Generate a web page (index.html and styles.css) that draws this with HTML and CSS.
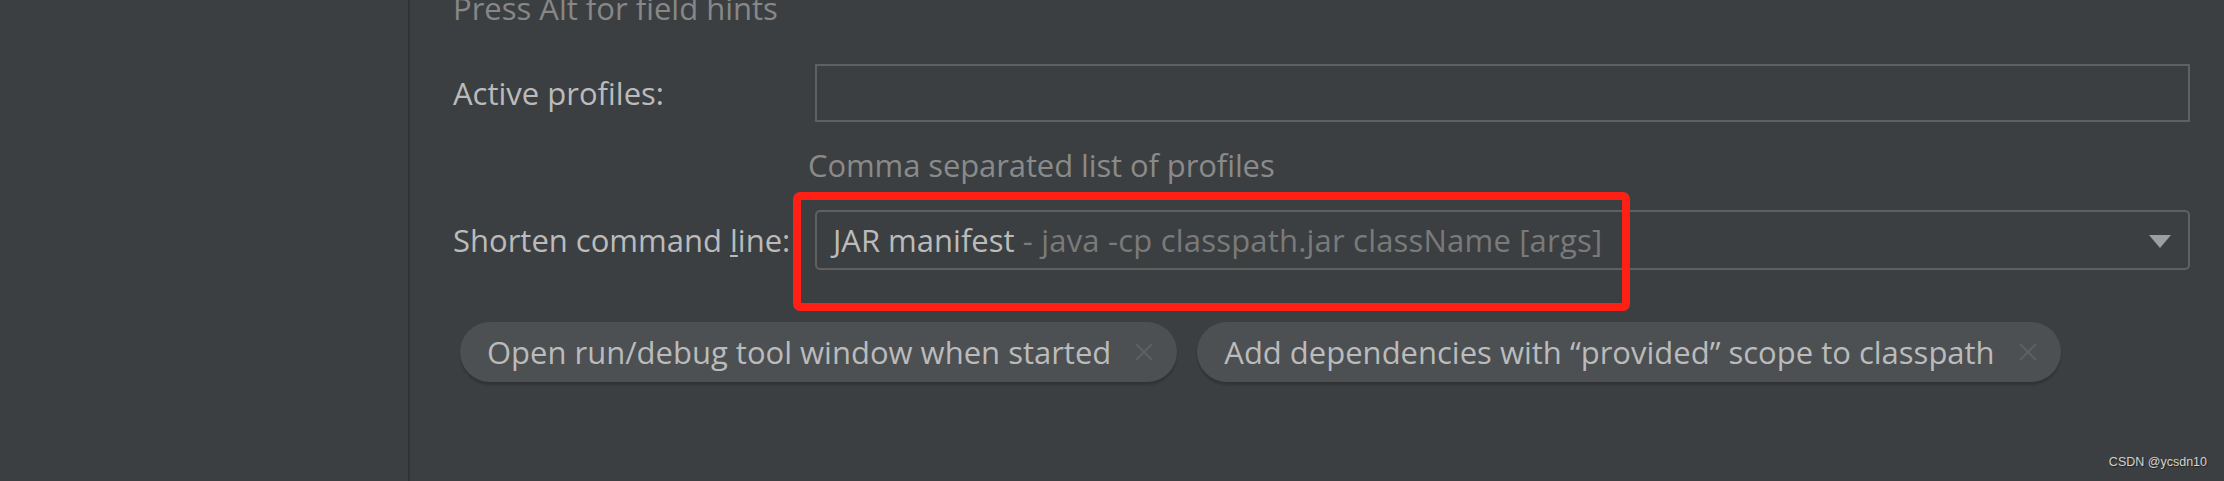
FILE: index.html
```html
<!DOCTYPE html>
<html lang="en">
<head>
<meta charset="utf-8">
<title>Run configuration</title>
<link rel="stylesheet" href="styles.css">
</head>
<body>
<div class="window">
  <aside class="sidebar"></aside>
  <main class="content">
    <div class="press-hint">Press Alt for field hints</div>
    <div class="form">
      <div class="label row-profiles">Active profiles:</div>
      <div class="textfield row-profiles"></div>
      <div class="comment">Comma separated list of profiles</div>
      <div class="label row-shorten">Shorten command <span class="mnemonic">l</span>ine:</div>
      <div class="combo row-shorten">
        <span class="combo-value">JAR manifest</span><span class="combo-desc">&nbsp;- java -cp classpath.jar className [args]</span>
        <svg class="combo-arrow" width="22" height="13" viewBox="0 0 22 13"><path d="M0 0 H22 L11 13 Z" fill="#9c9fa2"/></svg>
        <span class="red-box"></span>
      </div>
    </div>
    <div class="chips">
      <div class="chip">
        <span class="chip-text">Open run/debug tool window when started</span>
        <svg class="chip-close" width="18" height="18" viewBox="0 0 18 18"><path d="M1 1 L17 17 M17 1 L1 17" stroke="#5d6164" stroke-width="2" fill="none"/></svg>
      </div>
      <div class="chip">
        <span class="chip-text">Add dependencies with “provided” scope to classpath</span>
        <svg class="chip-close" width="18" height="18" viewBox="0 0 18 18"><path d="M1 1 L17 17 M17 1 L1 17" stroke="#5d6164" stroke-width="2" fill="none"/></svg>
      </div>
    </div>
  </main>
  <div class="watermark">CSDN @ycsdn10</div>
</div>
</body>
</html>
```
FILE: styles.css
```css
html, body {
  margin: 0;
  padding: 0;
  background: #3c3f41;
}

.window {
  position: relative;
  display: flex;
  width: 2224px;
  height: 481px;
  overflow: hidden;
  background: #3c3f41;
  font-family: "Open Sans", "Noto Sans", sans-serif;
  font-size: 31px;
  line-height: 36px;
  color: #bbbbbb;
}

.sidebar {
  flex: 0 0 408px;
  border-right: 2px solid #303234;
}

.content {
  flex: 1;
  display: flex;
  flex-direction: column;
  padding: 0 34px 0 43px;
}

.press-hint {
  margin-top: -10px;
  height: 36px;
  color: #878787;
  white-space: nowrap;
}

.form {
  display: grid;
  grid-template-columns: 362px 1fr;
  margin-top: 38px;
}

.label {
  align-self: center;
  white-space: nowrap;
}

.mnemonic {
  text-decoration: underline;
  text-decoration-thickness: 2px;
  text-underline-offset: 3px;
}

.textfield {
  box-sizing: border-box;
  height: 58px;
  border: 2px solid #5e6061;
}

.comment {
  grid-column: 2;
  margin: 25px 0 0 -7px;
  height: 36px;
  color: #8a8a8a;
  white-space: nowrap;
  letter-spacing: -0.1px;
}

.row-shorten {
  margin-top: 27px;
}

.combo {
  position: relative;
  box-sizing: border-box;
  height: 60px;
  display: flex;
  align-items: center;
  padding: 0 17px 0 16px;
  border: 2px solid #5e6061;
  border-radius: 5px;
  white-space: nowrap;
}

.combo-value {
  color: #bbbbbb;
}

.combo-desc {
  flex: 1;
  color: #7a7a7a;
  letter-spacing: 0.2px;
}

.combo-arrow {
  display: block;
  margin-top: 2px;
}

.red-box {
  position: absolute;
  left: -24px;
  top: -20px;
  width: 837px;
  height: 119px;
  box-sizing: border-box;
  border: 8px solid #fe1f15;
  border-radius: 7px;
  pointer-events: none;
}

.chips {
  display: flex;
  gap: 20px;
  margin: 52px 0 0 7px;
}

.chip {
  display: flex;
  align-items: center;
  gap: 24px;
  height: 60px;
  padding: 0 24px 0 27px;
  border-radius: 30px;
  background: #4c5052;
  box-shadow: 0 3px 2px rgba(0, 0, 0, 0.18);
  white-space: nowrap;
}

.chip-text {
  color: #bbbbbb;
}

.chip-close {
  display: block;
}

.watermark {
  position: absolute;
  right: 17px;
  top: 454px;
  font-family: "Liberation Sans", Arial, sans-serif;
  font-size: 12.5px;
  line-height: 16px;
  color: #d2d2d2;
  text-shadow: 1px 1px 1px #222;
}
```
